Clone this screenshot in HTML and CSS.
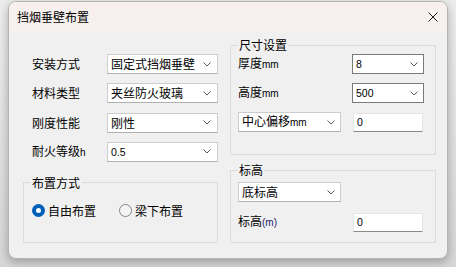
FILE: index.html
```html
<!DOCTYPE html>
<html lang="zh">
<head>
<meta charset="utf-8">
<title>挡烟垂壁布置</title>
<link rel="stylesheet" href="styles.css">
</head>
<body>
<div class="window">
  <div class="titlebar">
    <span class="title">挡烟垂壁布置</span>
    <svg class="close" width="10" height="10" viewBox="0 0 10 10"><path d="M0.5 0.5 L9.5 9.5 M9.5 0.5 L0.5 9.5" stroke="#1b1b1b" stroke-width="1" fill="none"/></svg>
  </div>
  <div class="content">
    <div class="col-left">
      <div class="rows">
        <div class="row"><span class="label">安装方式</span><div class="select wide"><span class="val">固定式挡烟垂壁</span><svg class="chev" width="8" height="5" viewBox="0 0 8 5"><polyline points="0.5,0.5 4,4 7.5,0.5" fill="none" stroke="#5a5a5a" stroke-width="1"/></svg></div></div>
        <div class="row"><span class="label">材料类型</span><div class="select wide"><span class="val">夹丝防火玻璃</span><svg class="chev" width="8" height="5" viewBox="0 0 8 5"><polyline points="0.5,0.5 4,4 7.5,0.5" fill="none" stroke="#5a5a5a" stroke-width="1"/></svg></div></div>
        <div class="row"><span class="label">刚度性能</span><div class="select wide"><span class="val">刚性</span><svg class="chev" width="8" height="5" viewBox="0 0 8 5"><polyline points="0.5,0.5 4,4 7.5,0.5" fill="none" stroke="#5a5a5a" stroke-width="1"/></svg></div></div>
        <div class="row"><span class="label">耐火等级<span class="latin">h</span></span><div class="select wide"><span class="val latin">0.5</span><svg class="chev" width="8" height="5" viewBox="0 0 8 5"><polyline points="0.5,0.5 4,4 7.5,0.5" fill="none" stroke="#5a5a5a" stroke-width="1"/></svg></div></div>
      </div>
      <fieldset class="group group-layout">
        <legend>布置方式</legend>
        <div class="radios">
          <label class="radio"><span class="dot on"></span><span>自由布置</span></label>
          <label class="radio second"><span class="dot"></span><span>梁下布置</span></label>
        </div>
      </fieldset>
    </div>
    <div class="col-right">
      <fieldset class="group group-size">
        <legend>尺寸设置</legend>
        <div class="rows tight">
          <div class="row"><span class="label">厚度<span class="latin">mm</span></span><div class="select small dark"><span class="val latin">8</span><svg class="chev" width="8" height="5" viewBox="0 0 8 5"><polyline points="0.5,0.5 4,4 7.5,0.5" fill="none" stroke="#5a5a5a" stroke-width="1"/></svg></div></div>
          <div class="row"><span class="label">高度<span class="latin">mm</span></span><div class="select small dark"><span class="val latin">500</span><svg class="chev" width="8" height="5" viewBox="0 0 8 5"><polyline points="0.5,0.5 4,4 7.5,0.5" fill="none" stroke="#5a5a5a" stroke-width="1"/></svg></div></div>
          <div class="row"><div class="select combo"><span class="val">中心偏移<span class="latin">mm</span></span><svg class="chev" width="8" height="5" viewBox="0 0 8 5"><polyline points="0.5,0.5 4,4 7.5,0.5" fill="none" stroke="#5a5a5a" stroke-width="1"/></svg></div><div class="input latin">0</div></div>
        </div>
      </fieldset>
      <fieldset class="group group-elev">
        <legend>标高</legend>
        <div class="select combo"><span class="val">底标高</span><svg class="chev" width="8" height="5" viewBox="0 0 8 5"><polyline points="0.5,0.5 4,4 7.5,0.5" fill="none" stroke="#5a5a5a" stroke-width="1"/></svg></div>
        <div class="row elev-row"><span class="label">标高<span class="latin paren">(m)</span></span><div class="input latin">0</div></div>
      </fieldset>
    </div>
  </div>
</div>
</body>
</html>
```
FILE: styles.css
```css
* { box-sizing: border-box; }
html, body { margin: 0; padding: 0; }
body {
  width: 456px;
  height: 267px;
  overflow: hidden;
  background: linear-gradient(#ededed, #d6d6d6);
  font-family: "Noto Sans CJK SC", "Noto Sans", sans-serif;
  font-size: 12px;
  color: #000;
}
.window {
  margin: 1px 0 0 8px;
  width: 440px;
  height: 258px;
  border: 1px solid #b4b4b4;
  border-radius: 8px;
  background: #f0f0f0;
  overflow: hidden;
  box-shadow: 0 3px 10px rgba(0,0,0,0.28);
}
.titlebar {
  height: 29px;
  background: #f8f0ee;
  display: flex;
  align-items: center;
  padding: 0 9px 0 8px;
}
.title { flex: 1; font-size: 12px; line-height: 16px; }
.close { display: block; margin-top: 1px; }
.content {
  display: flex;
  gap: 12px;
  padding-left: 14px;
}
.col-left { width: 195px; padding-top: 23px; }
.col-right { width: 206px; padding-top: 6px; }
.rows { display: flex; flex-direction: column; gap: 9.33px; padding-left: 9px; }
.rows.tight { gap: 9px; padding-left: 0; }
.row { display: flex; align-items: center; height: 20px; }
.label { flex: 1; line-height: 16px; white-space: nowrap; }
.latin { font-family: "Liberation Sans", "Noto Sans", sans-serif; font-size: 10.5px; }
.label .latin, .val .latin { font-size: 10px; }
.paren { color: #1a1a6a; }
.select {
  display: flex;
  align-items: center;
  height: 20px;
  background: #fff;
  border: 1px solid #cdcdcd;
  border-bottom-color: #b0b0b0;
  padding-left: 3px;
}
.select .val { flex: 1; line-height: 16px; white-space: nowrap; overflow: hidden; }
.select .chev { display: block; margin-right: 6px; flex: none; }
.select.wide { width: 111px; }
.select.small { width: 72px; }
.select.small .chev { margin-right: 5px; }
.select.dark { border-color: #7a7a7a; }
.select.combo { width: 103px; }
.select.combo .chev { margin-right: 5px; }
.input {
  width: 70px;
  height: 19px;
  margin-left: auto;
  margin-right: 1px;
  background: #fff;
  border: 1px solid #e6e6e6;
  border-bottom-color: #8a8a8a;
  padding-left: 3px;
  line-height: 17px;
}
.group {
  margin: 0;
  border: 1px solid #dcdcdc;
  min-width: 0;
}
.group legend {
  padding: 0 1px;
  line-height: 16px;
  font-size: 12px;
}
.group-layout {
  margin-top: 13px;
  width: 195px;
  padding: 12px 0 23px 6px;
}
.group-layout legend { padding: 0 2px; }
.radios { display: flex; align-items: center; height: 16px; padding-left: 2px; }
.radio { display: flex; align-items: center; gap: 3px; line-height: 16px; }
.radio.second { margin-left: 23px; }
.dot {
  width: 13px; height: 13px;
  border-radius: 50%;
  border: 1px solid #858585;
  background: #f4f4f4;
  flex: none;
}
.dot.on {
  border: 4px solid #005fb8;
  background: #fff;
}
.group-size {
  width: 206px;
  padding: 1px 11px 22px 7px;
}
.group-elev {
  width: 206px;
  margin-top: 7px;
  padding: 4px 11px 10px 7px;
}
.elev-row { margin-top: 10px; }
```
